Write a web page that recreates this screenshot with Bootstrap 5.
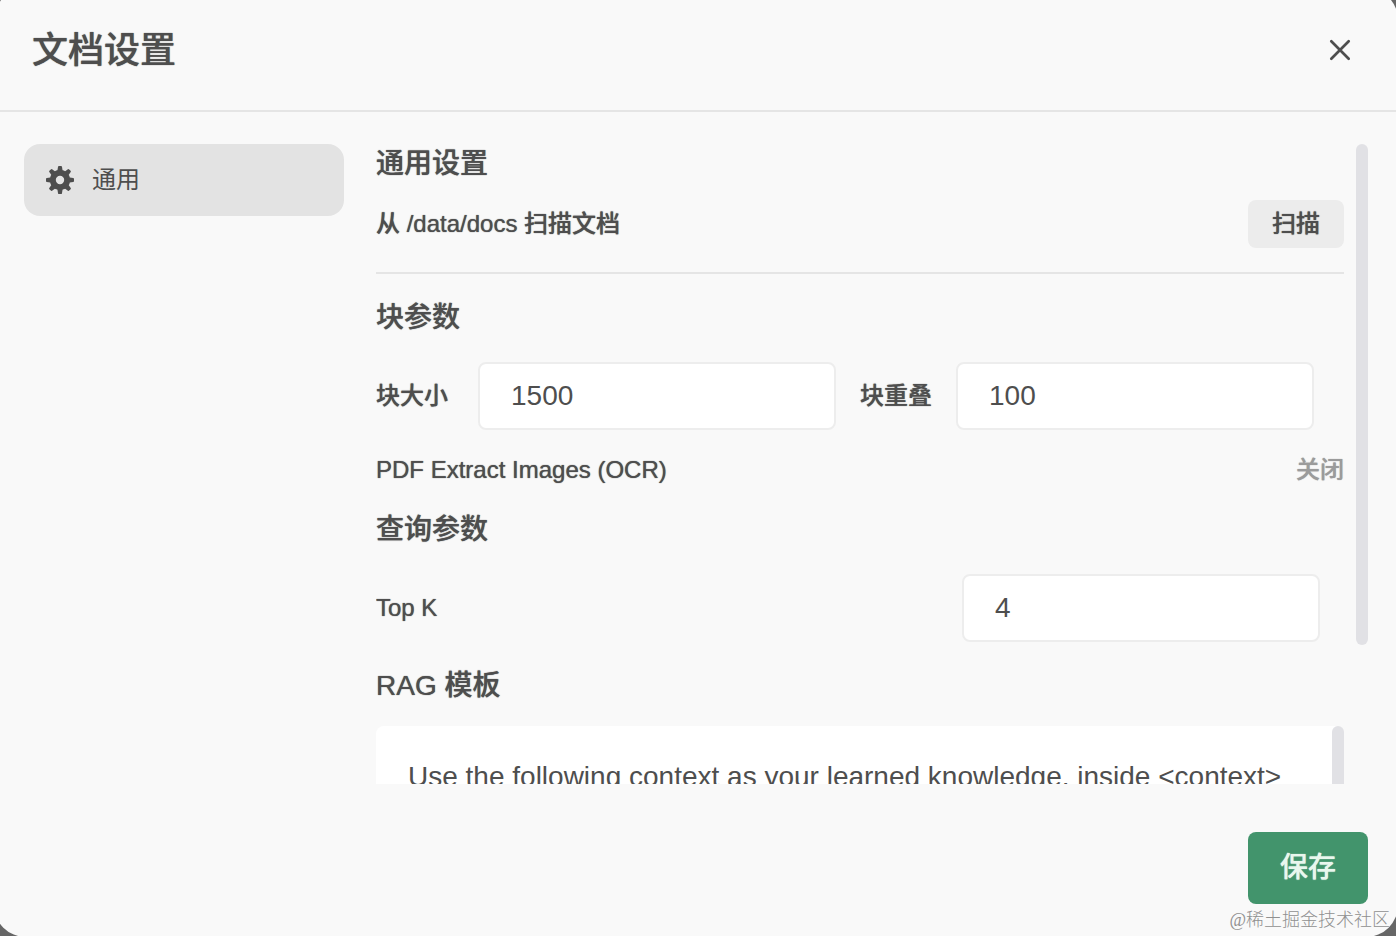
<!DOCTYPE html>
<html lang="zh-CN">
<head>
<meta charset="utf-8">
<meta name="viewport" content="width=device-width, initial-scale=1">
<title>文档设置</title>
<link href="https://cdn.jsdelivr.net/npm/bootstrap@5.3.0/dist/css/bootstrap.min.css" rel="stylesheet">
<style>
  body { background: #666; color: #4e4e4e; font-family: "Liberation Sans", "Noto Sans CJK SC", sans-serif; font-size: 24px; line-height: 32px; }
  .settings-dialog { background: #f9f9f9; clip-path: inset(-12px -2px -1px -6px round 32px); }
  .dialog-head { border-bottom: 2px solid #e5e5e5; padding: 25px 32px 33px; }
  .dialog-title { font-size: 36px; line-height: 52px; }
  .dialog-title, .section-title, .fw-label, .scan-btn, .save-btn, .toggle-btn { font-weight: 500; text-shadow: 0 0 1px currentColor; }
  .close-btn { width: 48px; height: 48px; color: #4e4e4e; }
  .dialog-body { padding: 32px 28px 0 24px; gap: 32px; min-height: 0; }
  .side-tabs { width: 320px; }
  .side-tab { background: #e3e3e3; color: #4e4e4e; border-radius: 16px; height: 72px; padding: 0 20px; gap: 16px; font-size: 24px; line-height: 32px; }
  .side-tab:hover { background: #dcdcdc; }
  .panel-wrap { gap: 12px; min-height: 0; min-width: 0; }
  .panel-scroll { overflow-y: auto; min-height: 0; min-width: 0; scrollbar-width: none; }
  .panel-scroll::-webkit-scrollbar, .template-box::-webkit-scrollbar { display: none; }
  .scroll-thumb { width: 12px; border-radius: 6px; background: #e1e1e5; }
  .panel-thumb { height: 501px; max-height: 100%; }
  .section-title { font-size: 28px; line-height: 40px; margin: 0; }
  .scan-btn { background: #ececec; color: #4e4e4e; border-radius: 8px; padding: 0 24px; height: 48px; font-size: 24px; line-height: 32px; }
  .rule-line { border-top: 2px solid #e5e5e5; margin: 24px 0; opacity: 1; }
  .num-input { height: 68px; border: 2px solid #ededed; border-radius: 8px; padding: 0 31px; font-size: 28px; color: #4e4e4e; background: #fff; }
  .chunk-grid { display: grid; grid-template-columns: 78px 1fr 72px 1fr; column-gap: 24px; align-items: center; margin: 24px 30px 16px 0; }
  .toggle-row { height: 48px; margin-bottom: 16px; }
  .toggle-btn { color: #9b9b9b; font-size: 24px; line-height: 32px; padding: 0; border: 0; }
  .topk-row { margin: 24px 24px 24px 0; }
  .topk-row .num-input { width: 358px; }
  .template-wrap { margin-top: 20px; }
  .template-box { height: 236px; border: 0; border-radius: 8px; padding: 31px 32px; font-size: 28px; line-height: 40px; color: #4e4e4e; background: #fff; resize: none; scrollbar-width: none; }
  .template-thumb { height: 120px; }
  .dialog-foot { padding: 48px 28px 32px; }
  .save-btn { background: #42946c; color: #e9f7ee; width: 120px; height: 72px; border-radius: 8px; font-size: 28px; line-height: 40px; padding: 0; }
  .save-btn:hover { background: #37805c; color: #fff; }
  .page-credit { right: 6px; bottom: 4px; color: #909090; font: 300 18px/24px "Liberation Serif", "Noto Sans CJK SC", serif; }
</style>
</head>
<body>
<main class="settings-dialog vh-100 d-flex flex-column position-relative">
  <header class="dialog-head d-flex justify-content-between align-items-center">
    <h1 class="dialog-title mb-0">文档设置</h1>
    <button type="button" class="close-btn btn p-0 border-0 d-flex align-items-center justify-content-center" aria-label="关闭">
      <svg width="24" height="24" viewBox="0 0 24 24" fill="none" stroke="currentColor" stroke-width="2.7" stroke-linecap="round"><path d="M3.3 2.300 20.700 19.700M20.700 2.300 3.300 19.700"/></svg>
    </button>
  </header>

  <div class="dialog-body d-flex flex-grow-1">
    <nav class="side-tabs flex-shrink-0">
      <button type="button" class="side-tab btn w-100 border-0 d-flex align-items-center">
        <svg width="32" height="32" viewBox="0 0 32 32" fill="currentColor" aria-hidden="true">
          <path fill-rule="evenodd" d="M16 5.800a10.200 10.200 0 1 0 0 20.400 10.200 10.200 0 0 0 0-20.400Zm0 6a4.200 4.200 0 1 1 0 8.400 4.200 4.200 0 0 1 0-8.400Z"/>
          <g stroke="currentColor" stroke-width="2" stroke-linejoin="round">
            <path id="tooth" d="M15 3 17 3 17.800 8 14.200 8Z"/>
            <use href="#tooth" transform="rotate(45 16 16)"/>
            <use href="#tooth" transform="rotate(90 16 16)"/>
            <use href="#tooth" transform="rotate(135 16 16)"/>
            <use href="#tooth" transform="rotate(180 16 16)"/>
            <use href="#tooth" transform="rotate(225 16 16)"/>
            <use href="#tooth" transform="rotate(270 16 16)"/>
            <use href="#tooth" transform="rotate(315 16 16)"/>
          </g>
        </svg>
        <span>通用</span>
      </button>
    </nav>

    <div class="panel-wrap d-flex flex-grow-1 align-items-start">
      <section class="panel-scroll flex-grow-1 h-100">
        <h2 class="section-title">通用设置</h2>
        <div class="d-flex justify-content-between align-items-center mt-3">
          <div class="fw-label">从 /data/docs 扫描文档</div>
          <button type="button" class="scan-btn btn border-0">扫描</button>
        </div>
        <hr class="rule-line">

        <h2 class="section-title">块参数</h2>
        <div class="chunk-grid">
          <label class="fw-label" for="chunkSize">块大小</label>
          <input class="num-input form-control" id="chunkSize" type="text" inputmode="numeric" value="1500">
          <label class="fw-label" for="chunkOverlap">块重叠</label>
          <input class="num-input form-control" id="chunkOverlap" type="text" inputmode="numeric" value="100">
        </div>
        <div class="toggle-row d-flex justify-content-between align-items-center">
          <div class="fw-label" id="ocrLabel">PDF Extract Images (OCR)</div>
          <button type="button" class="toggle-btn btn" aria-describedby="ocrLabel">关闭</button>
        </div>

        <h2 class="section-title">查询参数</h2>
        <div class="topk-row d-flex justify-content-between align-items-center">
          <label class="fw-label" for="topK">Top K</label>
          <input class="num-input form-control" id="topK" type="text" inputmode="numeric" value="4">
        </div>

        <h2 class="section-title"><label for="ragTemplate">RAG 模板</label></h2>
        <div class="template-wrap position-relative">
          <textarea class="template-box form-control d-block" id="ragTemplate">Use the following context as your learned knowledge, inside &lt;context&gt;&lt;/context&gt; XML tags.
&lt;context&gt;
    [context]
&lt;/context&gt;

When answer to user:
- If you don't know, just say that you don't know.
- If you don't know when you are not sure, ask for clarification.</textarea>
          <div class="scroll-thumb template-thumb position-absolute top-0 end-0" aria-hidden="true"></div>
        </div>
      </section>
      <div class="scroll-thumb panel-thumb flex-shrink-0" aria-hidden="true"></div>
    </div>
  </div>

  <footer class="dialog-foot d-flex justify-content-end">
    <button type="button" class="save-btn btn border-0">保存</button>
  </footer>
  <div class="page-credit position-absolute">@稀土掘金技术社区</div>
</main>
<script src="https://cdn.jsdelivr.net/npm/bootstrap@5.3.0/dist/js/bootstrap.bundle.min.js"></script>
</body>
</html>
